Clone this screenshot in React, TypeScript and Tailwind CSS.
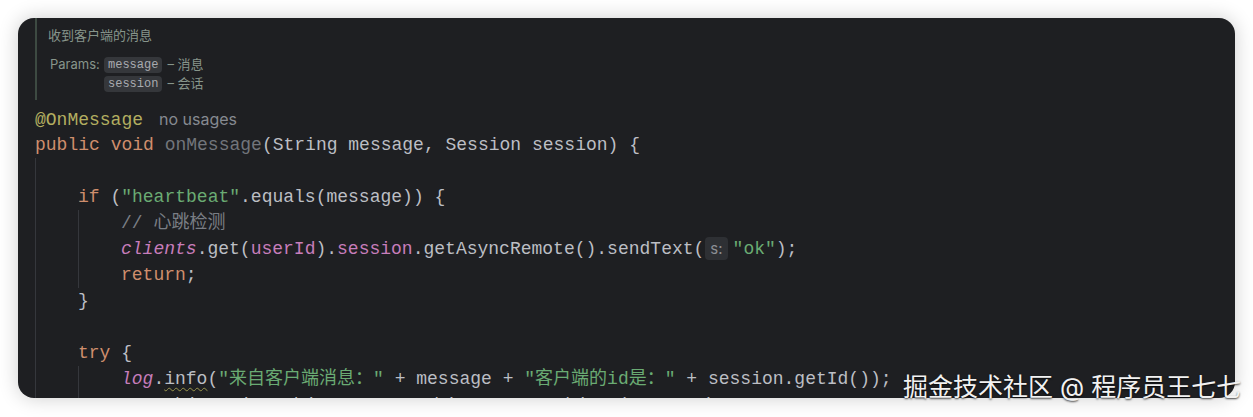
import React from "react";

const mono = "font-['Liberation_Mono','Noto_Sans_CJK_SC',monospace]";
const sans = "font-['Inter','Noto_Sans_CJK_SC',sans-serif]";

const K = ({ children }: { children: React.ReactNode }) => <span className="text-[#cf8e6d]">{children}</span>;
const S = ({ children }: { children: React.ReactNode }) => <span className="text-[#6aab73]">{children}</span>;
const F = ({ children }: { children: React.ReactNode }) => <span className="text-[#c77dbb]">{children}</span>;
const FI = ({ children }: { children: React.ReactNode }) => <span className="text-[#c77dbb] italic">{children}</span>;

const Line = ({ children }: { children?: React.ReactNode }) => (
  <div className="h-[26px] leading-[26px] whitespace-pre">{children}</div>
);

export default function App() {
  return (
    <div className="w-[1253px] h-[417px] bg-white pt-[18px] px-[18px] relative overflow-hidden">
      <div className="h-[380px] w-[1217px] rounded-[16px] bg-[#1e1f22] shadow-[0_0_20px_rgba(0,0,0,0.2)] overflow-hidden pl-[17px]">
        {/* doc comment */}
        <div className={`border-l-2 border-[#3d4a42] pl-[11px] pt-[8px] pb-[7px] ${sans} text-[13px] text-[#87958b]`}>
          <div className="h-[18px] leading-[18px]">收到客户端的消息</div>
          <div className="flex mt-[11px] pl-[2px]">
            <div className="w-[54px] leading-[19px]">Params:</div>
            <div className="flex flex-col">
              <div className="h-[19px] flex items-center gap-[5px]">
                <span className={`${mono} text-[12px] bg-[#35373b] text-[#a9abb0] rounded-[4px] px-[4px] h-[16px] leading-[16px]`}>message</span>
                <span>– 消息</span>
              </div>
              <div className="h-[19px] flex items-center gap-[5px]">
                <span className={`${mono} text-[12px] bg-[#35373b] text-[#a9abb0] rounded-[4px] px-[4px] h-[16px] leading-[16px]`}>session</span>
                <span>– 会话</span>
              </div>
            </div>
          </div>
        </div>

        {/* code */}
        <div className={`${mono} text-[18px] text-[#bcbec4] mt-[6px]`}>
          <Line>
            <span className="text-[#b3ae60]">@OnMessage</span>
            <span className={`${sans} text-[16px] text-[#868a91] ml-[16px]`}>no usages</span>
          </Line>
          <Line>
            <K>public</K> <K>void</K> <span className="text-[#72757b]">onMessage</span>(String message, Session session) {"{"}
          </Line>
          <div className="border-l border-[#35373c] pl-[42px]">
            <Line />
            <Line>
              <K>if</K> (<S>"heartbeat"</S>.equals(message)) {"{"}
            </Line>
            <div className="border-l border-[#35373c] pl-[42px]">
              <Line>
                <span className="text-[#7a7e85]">// 心跳检测</span>
              </Line>
              <Line>
                <FI>clients</FI>.get(<F>userId</F>).<F>session</F>.getAsyncRemote().sendText(
                <span className={`${sans} text-[15px] text-[#8c8f94] bg-[#2e3034] rounded-[4px] px-[5px] py-[2px] ml-[1px] mr-[5px]`}>s:</span>
                <S>"ok"</S>);
              </Line>
              <Line>
                <K>return</K>;
              </Line>
            </div>
            <Line>{"}"}</Line>
            <Line />
            <Line>
              <K>try</K> {"{"}
            </Line>
            <div className="border-l border-[#35373c] pl-[42px]">
              <Line>
                <FI>log</FI>.
                <span className="underline decoration-wavy decoration-[#9a954c] underline-offset-[3px] decoration-1">info</span>
                (<S>"来自客户端消息："</S> + message + <S>"客户端的id是："</S> + session.getId());
              </Line>
              <Line>
                JSONObject jsonObject = JSONObject.<span className="italic">parseObject</span>(message);
              </Line>
            </div>
          </div>
        </div>
      </div>

      <div
        className={`absolute left-[903px] top-[372px] text-[25px] leading-[30px] text-[#f2f2f2] whitespace-nowrap ${sans} [text-shadow:0_1px_2px_rgba(0,0,0,0.75)]`}
      >
        掘金技术社区 @ 程序员王七七
      </div>
    </div>
  );
}
